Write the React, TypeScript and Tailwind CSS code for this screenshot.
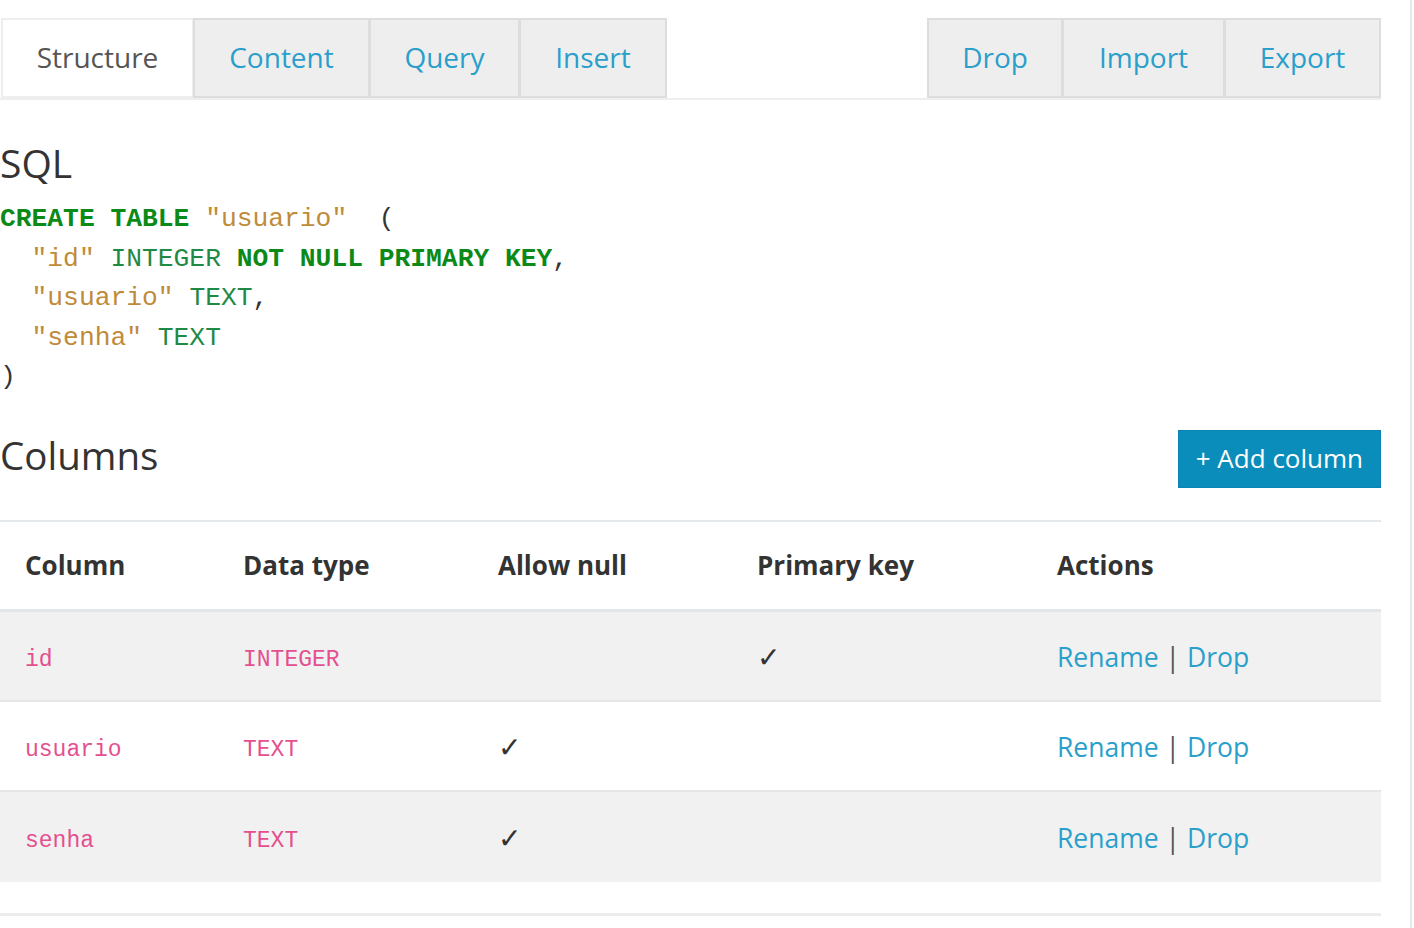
import { Fragment } from "react";

const leftTabs = [
  { label: "Structure", w: "w-[193px]" },
  { label: "Content", w: "w-[177px]" },
  { label: "Query", w: "w-[151px]" },
  { label: "Insert", w: "w-[148px]" },
];
const rightTabs = [
  { label: "Drop", w: "w-[136px]" },
  { label: "Import", w: "w-[163px]" },
  { label: "Export", w: "w-[157px]" },
];

const rows = [
  { name: "id", type: "INTEGER", nullable: false, pk: true },
  { name: "usuario", type: "TEXT", nullable: true, pk: false },
  { name: "senha", type: "TEXT", nullable: true, pk: false },
];

const sans = "font-['Open_Sans','Noto_Sans',sans-serif]";
const mono = "font-['Liberation_Mono','DejaVu_Sans_Mono',monospace]";

function Tab({ label, w, active }: { label: string; w: string; active?: boolean }) {
  return (
    <div
      className={`${w} h-[80px] pb-[3px] flex items-center justify-center border-2 -ml-[1px] text-[28px] ${
        active ? "bg-white border-[#eeeeee] text-[#555]" : "bg-[#eeeeee] border-[#dddddd] text-[#2a9fcb]"
      }`}
    >
      {label}
    </div>
  );
}

export default function App() {
  return (
    <div className={`w-[1414px] h-[928px] bg-white flex text-[#333] ${sans}`}>
      <main className="w-[1381px] pt-[18px]">
        {/* Tabs */}
        <div className="flex justify-between border-b-2 border-[#eeeeee]">
          <div className="flex pl-[2px]">
            {leftTabs.map((t, i) => (
              <Tab key={t.label} label={t.label} w={t.w} active={i === 0} />
            ))}
          </div>
          <div className="flex">
            {rightTabs.map((t) => (
              <Tab key={t.label} label={t.label} w={t.w} />
            ))}
          </div>
        </div>

        {/* SQL */}
        <h2 className="mt-[39px] text-[39px] leading-[48px] text-[#333]">SQL</h2>
        <pre className={`mt-[13px] text-[26.3px] leading-[39.6px] ${mono}`}>
          <span className="font-bold text-[#0b8a17]">CREATE TABLE</span>{" "}
          <span className="text-[#bf8b3a]">"usuario"</span>{"  "}(
          {"\n  "}
          <span className="text-[#bf8b3a]">"id"</span>{" "}
          <span className="text-[#1f8a45]">INTEGER</span>{" "}
          <span className="font-bold text-[#0b8a17]">NOT NULL PRIMARY KEY</span>,
          {"\n  "}
          <span className="text-[#bf8b3a]">"usuario"</span>{" "}
          <span className="text-[#1f8a45]">TEXT</span>,
          {"\n  "}
          <span className="text-[#bf8b3a]">"senha"</span>{" "}
          <span className="text-[#1f8a45]">TEXT</span>
          {"\n"})
        </pre>

        {/* Columns */}
        <div className="mt-[32px] flex justify-between items-center">
          <h2 className="text-[38.5px] leading-[48px] pb-[8px]">Columns</h2>
          <button className="h-[58px] px-[17px] bg-[#0a8dbb] border border-[#0a84b0] text-white text-[26px]">
            + Add column
          </button>
        </div>

        <div className="mt-[32px] border-t-2 border-[#e5e8eb]">
          <div className="grid grid-cols-[218px_255px_259px_300px_1fr] h-[90px] items-center border-b-[3px] border-[#e3e6e9] font-bold text-[26px] text-[#333]">
            <div className="pl-[25px]">Column</div>
            <div className="pl-[25px]">Data type</div>
            <div className="pl-[25px]">Allow null</div>
            <div className="pl-[25px]">Primary key</div>
            <div className="pl-[25px]">Actions</div>
          </div>
          {rows.map((r, i) => (
            <div
              key={r.name}
              className={`grid grid-cols-[218px_255px_259px_300px_1fr] h-[90px] items-center ${
                i % 2 === 0 ? "bg-[#f1f1f1]" : "bg-white"
              } ${i < rows.length - 1 ? "border-b-2 border-[#e6e6e6]" : ""}`}
            >
              <div className={`pl-[25px] pt-[9px] text-[23px] text-[#e4508f] ${mono}`}>{r.name}</div>
              <div className={`pl-[25px] pt-[9px] text-[23px] text-[#e4508f] ${mono}`}>{r.type}</div>
              <div className="pl-[25px] text-[28px] text-[#333]">{r.nullable ? "✓" : ""}</div>
              <div className="pl-[25px] text-[28px] text-[#333]">{r.pk ? "✓" : ""}</div>
              <div className="pl-[25px] pt-[3px] text-[26.5px]">
                <Fragment>
                  <span className="text-[#2a9fcb]">Rename</span>
                  <span className="text-[#555]"> | </span>
                  <span className="text-[#2a9fcb]">Drop</span>
                </Fragment>
              </div>
            </div>
          ))}
          <div className="mt-[31px] border-t-[3px] border-[#ececec]" />
        </div>
      </main>
      <div className="w-[29px]" />
      <div className="w-[2px] h-full bg-[#e6e6e6]" />
    </div>
  );
}
